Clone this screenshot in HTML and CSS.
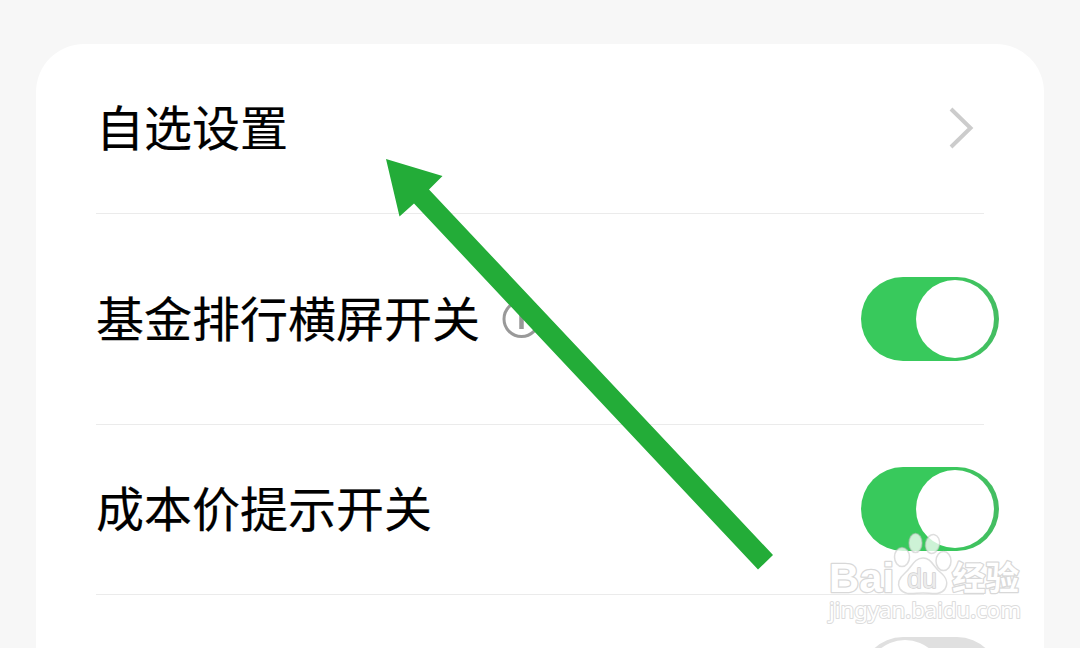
FILE: index.html
```html
<!DOCTYPE html>
<html lang="zh-CN">

<head>
    <meta charset="UTF-8">
    <meta name="viewport" content="width=device-width, initial-scale=1.0">
    <title>自选设置</title>
    <link rel="stylesheet" href="styles.css">
</head>

<body>

    <main class="card">
        <div class="row">
            <span class="label">自选设置</span>
            <svg class="chevron" viewBox="0 0 26 42">
                <path d="M2 2 L21.5 21 L2 40" />
            </svg>
        </div>

        <div class="row row-tall">
            <span class="label">基金排行横屏开关</span>
            <svg class="info" viewBox="0 0 40 40">
                <circle cx="20.5" cy="20" r="17.5" />
                <path d="M20.5 10 V13.5 M20.5 15 V30" />
            </svg>
            <div class="switch on"></div>
        </div>

        <div class="row">
            <span class="label">成本价提示开关</span>
            <div class="switch on"></div>
        </div>

        <div class="row">
            <div class="switch"></div>
        </div>
    </main>

    <!-- Arrow pointing at the first row -->
    <svg class="arrow" viewBox="0 0 1080 648">
        <polygon points="386,159 442.5,176 429,189.5 773,555 758,569.5 414,203.5 399.5,216.5" />
    </svg>

    <svg class="watermark" viewBox="0 0 210 100">
        <g class="paw">
            <ellipse cx="82" cy="27" rx="7.5" ry="9.5" />
            <ellipse cx="95.5" cy="13" rx="6.5" ry="9.5" />
            <ellipse cx="112.5" cy="14" rx="7" ry="9.5" transform="rotate(12 112.5 14)" />
            <ellipse cx="123.5" cy="31" rx="7.5" ry="9.5" />
            <path d="M103 28 C94 28 92 37 85 43 C78 49 77 54 80 59 C85 66 94 63 103 63 C112 63 120 66 125 59 C129 52 126 47 120 42 C113 36 111 28 103 28 Z" />
        </g>
        <text class="brand" x="9" y="62" textLength="65" lengthAdjust="spacingAndGlyphs">Bai</text>
        <text class="du" x="87" y="58" textLength="30" lengthAdjust="spacingAndGlyphs">du</text>
        <text class="brand-cn" x="132" y="60" textLength="67" lengthAdjust="spacingAndGlyphs">经验</text>
        <text class="site" x="9" y="88" textLength="192" lengthAdjust="spacingAndGlyphs">jingyan.baidu.com</text>
    </svg>

</body>

</html>
```

FILE: styles.css
```css
body {
    font-family: "Noto Sans CJK SC", sans-serif;
    background-color: #f7f7f7;
    margin: 0;
    height: 648px;
    overflow: hidden;
    position: relative;
}

.card {
    box-sizing: border-box;
    height: 604px;
    margin: 44px 36px 0;
    padding: 0 60px;
    background-color: #fff;
    border-radius: 48px 48px 0 0;
    overflow: hidden;
}

.row {
    display: flex;
    align-items: center;
    box-sizing: border-box;
    height: 170px;
    padding-bottom: 1px;
    border-bottom: 1px solid #ebebeb;
}

.row-tall {
    height: 211px;
    padding-bottom: 0;
}

.label {
    font-size: 48px;
    line-height: 70px;
    padding-bottom: 6px;
    color: #000;
    -webkit-text-stroke: 0.2px #000;
}

.chevron {
    width: 26px;
    height: 42px;
    margin-left: auto;
    margin-right: 9px;
    fill: none;
    stroke: #ccc;
    stroke-width: 4;
}

.info {
    width: 40px;
    height: 40px;
    margin-left: 21px;
    fill: none;
    stroke: #999;
    stroke-width: 3;
}

.info path {
    stroke-width: 4.5;
}

/* Toggle */
.switch {
    display: flex;
    box-sizing: border-box;
    width: 138px;
    height: 84px;
    padding: 3px 5px;
    margin-left: auto;
    margin-right: -15px;
    border-radius: 42px;
    background-color: #e0e0e0;
}

.switch::after {
    content: "";
    width: 78px;
    height: 78px;
    border-radius: 50%;
    background-color: #fff;
}

.switch.on {
    justify-content: flex-end;
    background: linear-gradient(to right, #38c95c 60%, #45bd62);
}

.arrow {
    position: absolute;
    left: 0;
    top: 0;
    width: 1080px;
    height: 648px;
    fill: #23ac38;
}

/* Watermark in the corner */
.watermark {
    position: absolute;
    left: 820px;
    top: 530px;
    width: 210px;
    height: 100px;
    fill: #fff;
    stroke: #d8d8d8;
    stroke-width: 2.5;
    stroke-linejoin: round;
    paint-order: stroke;
}

.paw {
    fill: rgba(255, 255, 255, 0.75);
    stroke: rgba(190, 190, 190, 0.5);
    stroke-width: 1.5;
    paint-order: normal;
}

.brand {
    font: bold 41px "Liberation Sans", sans-serif;
}

.du {
    font: 28px "Liberation Sans", sans-serif;
    fill: #ececec;
    stroke: #d0d0d0;
    stroke-width: 1.5;
}

.brand-cn {
    font: bold 33px "Noto Sans CJK SC", sans-serif;
}

.site {
    font: 22px "Noto Sans", sans-serif;
    stroke: #dcdcdc;
    stroke-width: 2;
}
```
